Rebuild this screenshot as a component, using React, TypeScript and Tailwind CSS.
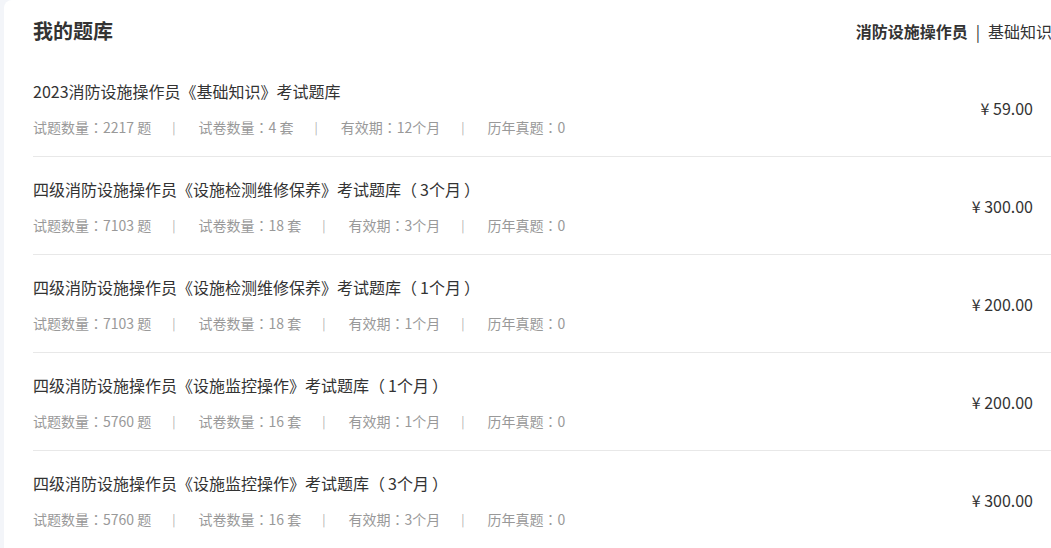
import React from "react";

type Item = {
  title: string;
  suffix?: string;
  count: string;
  papers: string;
  valid: string;
  real: string;
  price: string;
};

const items: Item[] = [
  { title: "2023消防设施操作员《基础知识》考试题库", count: "2217", papers: "4", valid: "12个月", real: "0", price: "59.00" },
  { title: "四级消防设施操作员《设施检测维修保养》考试题库", suffix: "3个月", count: "7103", papers: "18", valid: "3个月", real: "0", price: "300.00" },
  { title: "四级消防设施操作员《设施检测维修保养》考试题库", suffix: "1个月", count: "7103", papers: "18", valid: "1个月", real: "0", price: "200.00" },
  { title: "四级消防设施操作员《设施监控操作》考试题库", suffix: "1个月", count: "5760", papers: "16", valid: "1个月", real: "0", price: "200.00" },
  { title: "四级消防设施操作员《设施监控操作》考试题库", suffix: "3个月", count: "5760", papers: "16", valid: "3个月", real: "0", price: "300.00" },
];

const font = { fontFamily: '"Noto Sans CJK SC", "Noto Sans", sans-serif' };
const tc = { fontFamily: '"Noto Sans CJK TC", sans-serif' };

function Sep() {
  return <span className="ml-[21px] mr-[23px] text-[12px] text-[#b0b0b0]">|</span>;
}

function Colon() {
  return <span style={tc}>：</span>;
}

export default function App() {
  return (
    <div className="w-[1051px] h-[548px] overflow-hidden bg-[#f3f5f9] flex" style={font}>
      <div className="w-[4px] shrink-0" />
      <div className="w-[1070px] shrink-0 bg-white rounded-tl-lg pl-[29px] pr-[22px]">
        <div className="flex items-center justify-between h-[59px] pt-[2px]">
          <div className="text-[20px] font-bold text-[#333] leading-[28px]">我的题库</div>
          <div className="flex items-center text-[16px] text-[#333]">
            <span className="font-bold">消防设施操作员</span>
            <span className="mx-[8px]">|</span>
            <span>基础知识</span>
          </div>
        </div>
        {items.map((it, i) => (
          <div key={i} className="flex items-center justify-between border-b border-[#e8e8e8] h-[98px]">
            <div className="flex flex-col">
              <div className="text-[16px] leading-[24px] text-[#333]">
                {it.title}
                {it.suffix ? (
                  <span>
                    <span className="mr-[3px]">（</span>
                    {it.suffix}
                    <span className="ml-[3px]">）</span>
                  </span>
                ) : null}
              </div>
              <div className="mt-[14px] flex items-center text-[14px] leading-[20px] text-[#999]">
                <span>试题数量<Colon />{it.count} 题</span>
                <Sep />
                <span>试卷数量<Colon />{it.papers} 套</span>
                <Sep />
                <span>有效期<Colon />{it.valid}</span>
                <Sep />
                <span>历年真题<Colon />{it.real}</span>
              </div>
            </div>
            <div className="mr-[19px] text-[16px] text-[#333]">¥ {it.price}</div>
          </div>
        ))}
      </div>
    </div>
  );
}
